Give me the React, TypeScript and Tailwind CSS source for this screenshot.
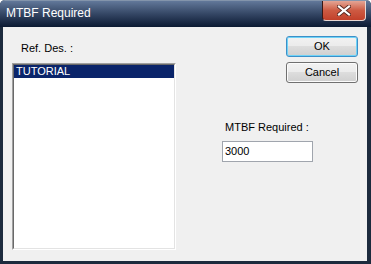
import React from "react";

function CloseGlyph() {
  return (
    <svg width="14" height="11" viewBox="0 0 14 11" className="block">
      <path d="M2 1.5 L12 9.5 M12 1.5 L2 9.5" stroke="#5a2a22" strokeWidth="4" strokeLinecap="square" />
      <path d="M2 1.5 L12 9.5 M12 1.5 L2 9.5" stroke="#ffffff" strokeWidth="2.2" strokeLinecap="square" />
    </svg>
  );
}

function Button({ label, isDefault }: { label: string; isDefault?: boolean }) {
  return (
    <div
      className={
        "w-[72px] h-[21px] rounded-[3px] border flex items-center justify-center text-[11px] leading-[13px] text-black " +
        (isDefault
          ? "border-[#3c8fc8] shadow-[inset_0_0_0_1px_#6fd3f7]"
          : "border-[#707070] shadow-[inset_0_0_0_1px_#fbfbfb]")
      }
      style={{
        background:
          "linear-gradient(to bottom, #f2f2f2 0%, #ebebeb 50%, #dddddd 50%, #cfcfcf 100%)",
      }}
    >
      {label}
    </div>
  );
}

export default function App() {
  return (
    <div
      className="w-[371px] h-[264px] flex flex-col bg-[#1c2a3d] rounded-t-[5px] overflow-hidden"
      style={{ fontFamily: '"Liberation Sans", Arial, sans-serif' }}
    >
      {/* Title bar */}
      <div className="h-[27px] flex items-start justify-between bg-gradient-to-b from-[#62789a] to-[#0c1a33] border-t border-[#8394ab]">
        <div className="pl-[6px] pt-[5px] text-[12px] leading-[14px] text-white">MTBF Required</div>
        <div className="mr-[5px] w-[44px] h-[20px] rounded-b-[4px] border border-t-0 border-[#3a1712] border-b-[#e8d8d4] border-r-[#e8d8d4] flex items-center justify-center bg-gradient-to-b from-[#e3a595] via-[#cd5a42] to-[#c2402a]">
          <CloseGlyph />
        </div>
      </div>

      {/* Client area */}
      <div className="flex-1 ml-[3px] mr-[4px] mb-[3px] bg-[#f0f0f0] flex text-[11px] leading-[13px] text-black">
        {/* Left column */}
        <div className="pl-[9px] pt-[15px] flex flex-col">
          <div className="pl-[9px]">Ref. Des. :</div>
          <div className="mt-[8px] w-[164px] h-[187px] border-t border-l border-[#a0a0a0] border-b border-r border-b-[#ffffff] border-r-[#ffffff]">
            <div className="w-full h-full border-t border-l border-[#696969] border-b border-r border-b-[#e3e3e3] border-r-[#e3e3e3] bg-white">
              <div className="h-[13px] bg-[#0a246a] text-white pl-[2px] leading-[13px]">TUTORIAL</div>
            </div>
          </div>
        </div>

        {/* Right column */}
        <div className="ml-[46px] w-[136px] pt-[9px] flex flex-col">
          <div className="self-end flex flex-col gap-[5px]">
            <Button label="OK" isDefault />
            <Button label="Cancel" />
          </div>
          <div className="mt-[38px] pl-[3px]">MTBF Required :</div>
          <div className="mt-[7px] w-[91px] h-[21px] border border-[#a0a5ad] bg-white flex items-center pl-[2px]">
            3000
          </div>
        </div>
      </div>
    </div>
  );
}
